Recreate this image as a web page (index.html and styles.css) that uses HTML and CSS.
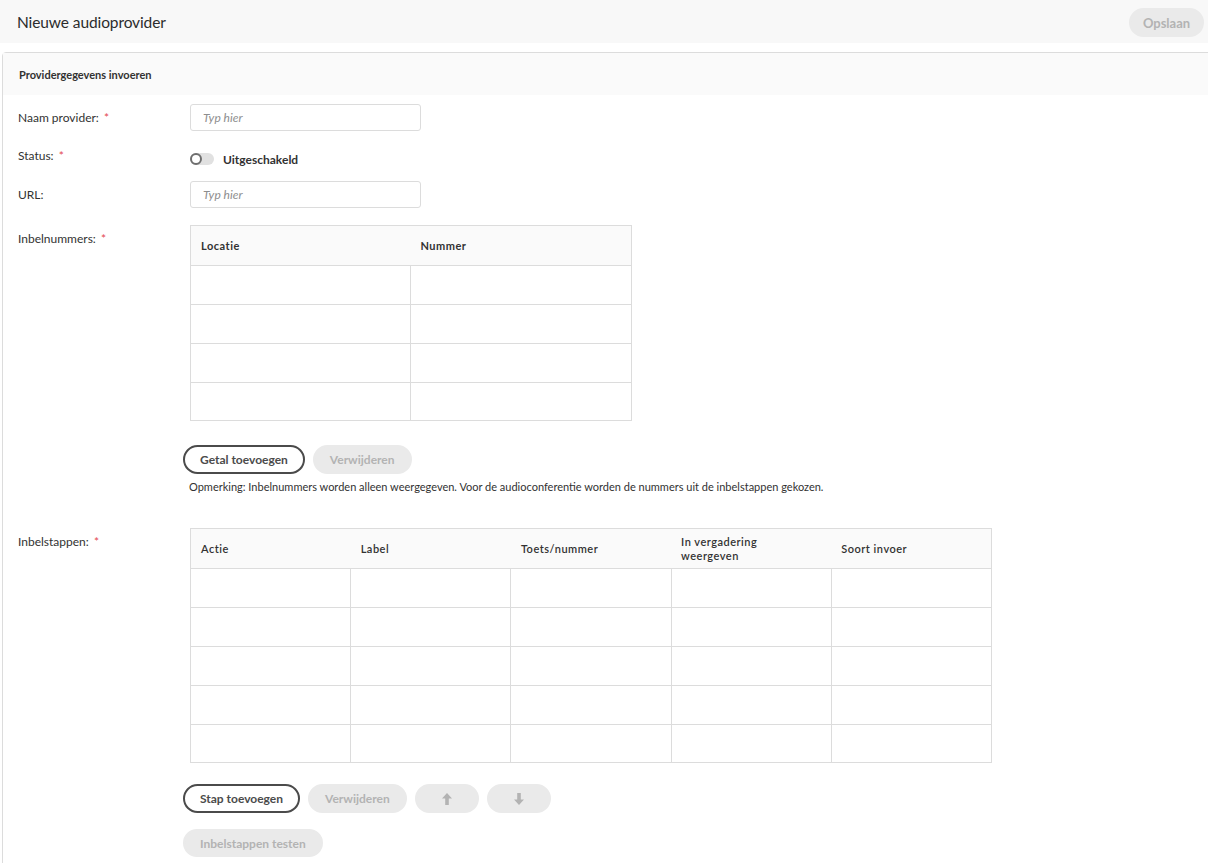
FILE: index.html
```html
<!DOCTYPE html>
<html lang="nl">
<head>
<meta charset="utf-8">
<title>Nieuwe audioprovider</title>
<link rel="stylesheet" href="styles.css">
</head>
<body>
<header class="topbar">
  <h1 class="title">Nieuwe audioprovider</h1>
  <button class="btn btn-disabled btn-save">Opslaan</button>
</header>

<section class="panel">
  <div class="panel-head">Providergegevens invoeren</div>
  <div class="panel-body">
    <div class="row row-name">
      <label class="label label-input">Naam provider: <span class="req">*</span></label>
      <input class="text-input" type="text" placeholder="Typ hier">
    </div>

    <div class="row row-status">
      <label class="label label-status">Status: <span class="req">*</span></label>
      <div class="toggle-wrap">
        <span class="toggle"><span class="knob"></span></span>
        <span class="toggle-text">Uitgeschakeld</span>
      </div>
    </div>

    <div class="row row-url">
      <label class="label label-input">URL:</label>
      <input class="text-input" type="text" placeholder="Typ hier">
    </div>

    <div class="row row-table">
      <label class="label label-table">Inbelnummers: <span class="req">*</span></label>
      <div class="field">
        <table class="grid grid-numbers">
          <thead>
            <tr><th>Locatie</th><th>Nummer</th></tr>
          </thead>
          <tbody>
            <tr><td></td><td></td></tr>
            <tr><td></td><td></td></tr>
            <tr><td></td><td></td></tr>
            <tr><td></td><td></td></tr>
          </tbody>
        </table>
        <div class="btn-row btn-row-numbers">
          <button class="btn btn-outline">Getal toevoegen</button>
          <button class="btn btn-disabled">Verwijderen</button>
        </div>
        <p class="note">Opmerking: Inbelnummers worden alleen weergegeven. Voor de audioconferentie worden de nummers uit de inbelstappen gekozen.</p>
      </div>
    </div>

    <div class="row row-table row-steps">
      <label class="label label-table">Inbelstappen: <span class="req">*</span></label>
      <div class="field">
        <table class="grid grid-steps">
          <thead>
            <tr><th>Actie</th><th>Label</th><th>Toets/nummer</th><th>In vergadering<br>weergeven</th><th>Soort invoer</th></tr>
          </thead>
          <tbody>
            <tr><td></td><td></td><td></td><td></td><td></td></tr>
            <tr><td></td><td></td><td></td><td></td><td></td></tr>
            <tr><td></td><td></td><td></td><td></td><td></td></tr>
            <tr><td></td><td></td><td></td><td></td><td></td></tr>
            <tr><td></td><td></td><td></td><td></td><td></td></tr>
          </tbody>
        </table>
        <div class="btn-row btn-row-steps">
          <button class="btn btn-outline">Stap toevoegen</button>
          <button class="btn btn-disabled">Verwijderen</button>
          <button class="btn btn-disabled btn-icon" aria-label="Omhoog">
            <svg width="10" height="12" viewBox="0 0 10 12"><polygon points="5,0 10,5.5 6.8,5.5 6.8,12 3.2,12 3.2,5.5 0,5.5" fill="#b3b3b3"/></svg>
          </button>
          <button class="btn btn-disabled btn-icon" aria-label="Omlaag">
            <svg width="10" height="12" viewBox="0 0 10 12"><polygon points="5,12 10,6.5 6.8,6.5 6.8,0 3.2,0 3.2,6.5 0,6.5" fill="#b3b3b3"/></svg>
          </button>
        </div>
        <div class="btn-row btn-row-test">
          <button class="btn btn-disabled btn-test">Inbelstappen testen</button>
        </div>
      </div>
    </div>
  </div>
</section>
</body>
</html>
```

FILE: styles.css
```css
* { box-sizing: border-box; }

html, body {
  margin: 0;
  padding: 0;
  background: #ffffff;
  overflow: hidden;
}

body {
  font-family: Lato, "Open Sans", sans-serif;
  color: #323232;
  font-size: 12px;
}

.topbar {
  height: 43px;
  background: #f8f8f8;
  display: flex;
  align-items: center;
  justify-content: space-between;
  padding: 0 4px 0 17px;
}

.title {
  margin: 0;
  font-size: 15.5px;
  font-weight: 400;
  color: #2c2c2c;
  letter-spacing: -0.1px;
}

.btn {
  font-family: Lato, "Open Sans", sans-serif;
  font-weight: 700;
  font-size: 12px;
  height: 29px;
  border-radius: 15px;
  padding: 0 15px;
  display: inline-flex;
  align-items: center;
  justify-content: center;
  cursor: default;
  white-space: nowrap;
}

.btn-disabled {
  background: #eaeaea;
  border: 2px solid #eaeaea;
  color: #b3b3b3;
}

.btn-outline {
  background: #ffffff;
  border: 2px solid #4b4b4b;
  color: #4b4b4b;
}

.btn-save {
  font-size: 13px;
  width: 75px;
  margin-top: 2px;
}

.panel {
  margin: 9px -6px 0 2px;
  border: 1px solid #dcdcdc;
  border-radius: 4px 4px 0 0;
  min-height: 820px;
}

.panel-head {
  height: 42px;
  background: #fafafa;
  padding: 0 16px;
  display: flex;
  align-items: center;
  font-size: 11px;
  font-weight: 700;
  color: #323232;
}

.panel-body {
  padding: 0 15px;
}

.row {
  display: flex;
  align-items: flex-start;
}

.label {
  width: 172px;
  flex: none;
  font-size: 12px;
  color: #323232;
  line-height: 16px;
}

.req {
  color: #e34850;
  margin-left: 2px;
}

.row-name { margin-top: 9px; }
.label-input { padding-top: 6px; }

.text-input {
  width: 231px;
  height: 27px;
  border: 1px solid #dcdcdc;
  border-radius: 3px;
  padding: 0 12px;
  font-family: Lato, "Open Sans", sans-serif;
  font-size: 12px;
  color: #323232;
  background: #ffffff;
  outline: none;
}

.text-input::placeholder {
  color: #8e8e8e;
  font-style: italic;
}

.row-status { height: 31px; margin-top: 10px; }
.label-status { padding-top: 7px; }

.toggle-wrap {
  display: flex;
  align-items: center;
  margin-top: 10px;
  height: 16px;
}

.toggle {
  width: 24px;
  height: 12px;
  border-radius: 6px;
  background: #e1e1e1;
  position: relative;
  display: inline-block;
}

.knob {
  position: absolute;
  left: 0;
  top: 0;
  width: 12px;
  height: 12px;
  border-radius: 50%;
  background: #ffffff;
  border: 2px solid #6e6e6e;
}

.toggle-text {
  margin-left: 9px;
  font-weight: 700;
  font-size: 12px;
  color: #323232;
}

.row-url { margin-top: 9px; }

.row-table { margin-top: 17px; }
.label-table { padding-top: 6px; }

.field {
  display: flex;
  flex-direction: column;
  align-items: flex-start;
}

.grid {
  border-collapse: collapse;
  table-layout: fixed;
}

.grid th {
  height: 40px;
  background: #fafafa;
  border: 1px solid #dcdcdc;
  border-left: none;
  border-right: none;
  text-align: left;
  padding: 0 10px;
  font-size: 11px;
  font-weight: 700;
  letter-spacing: 0.5px;
  color: #323232;
  line-height: 14px;
}

.grid th:first-child { border-left: 1px solid #dcdcdc; }
.grid th:last-child { border-right: 1px solid #dcdcdc; }

.grid td {
  height: 39px;
  border: 1px solid #dcdcdc;
  padding: 0;
}

.grid tbody tr:last-child td { height: 38px; }

.grid-numbers { width: 442px; }
.grid-numbers th:first-child, .grid-numbers td:first-child { width: 220px; }

.grid-steps { width: 802px; }
.grid-steps th { font-weight: 600; }
.grid-steps th, .grid-steps td { width: 160px; }

.btn-row {
  display: flex;
  gap: 8px;
  margin-left: -7px;
}

.btn-row-numbers { margin-top: 24px; }

.note {
  margin: 5px 0 0 -1px;
  font-size: 11px;
  line-height: 16px;
  color: #323232;
}

.row-steps { margin-top: 33px; }

.btn-row-steps { margin-top: 21px; }

.btn-icon { width: 64px; padding: 0; }

.btn-row-test { margin-top: 16px; }
.btn-test { height: 28px; }
```
